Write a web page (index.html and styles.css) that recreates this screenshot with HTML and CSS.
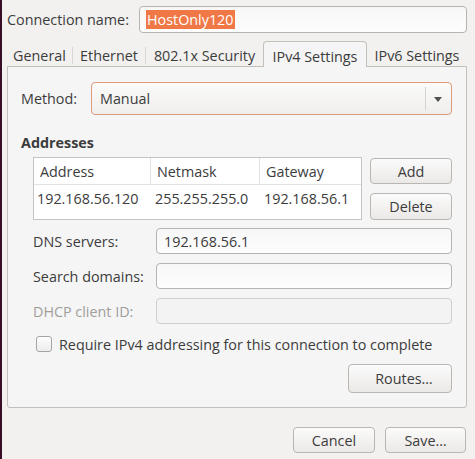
FILE: index.html
```html
<!DOCTYPE html>
<html>
<head>
<meta charset="utf-8">
<link rel="stylesheet" href="styles.css">
</head>
<body>
<div class="window">
  <div class="name-row">
    <span class="name-label">Connection name:</span>
    <div class="entry name-entry"><span class="selected">HostOnly120</span></div>
  </div>
  <div class="notebook">
    <div class="tabs">
      <div class="tab t-general">General</div>
      <div class="tab t-ethernet">Ethernet</div>
      <div class="tab t-security">802.1x Security</div>
      <div class="tab active t-ipv4">IPv4 Settings</div>
      <div class="tab t-ipv6">IPv6 Settings</div>
    </div>
    <div class="panel">
      <div class="method-row">
        <span class="method-label">Method:</span>
        <div class="combo">
          <span class="combo-text">Manual</span>
          <span class="combo-sep"></span>
          <span class="combo-arrow"></span>
        </div>
      </div>
      <div class="heading">Addresses</div>
      <div class="addr-block">
        <div class="table">
          <div class="thead">
            <div class="th c1">Address</div>
            <div class="th c2">Netmask</div>
            <div class="th c3">Gateway</div>
          </div>
          <div class="tr">
            <div class="td c1">192.168.56.120</div>
            <div class="td c2">255.255.255.0</div>
            <div class="td c3">192.168.56.1</div>
          </div>
        </div>
        <div class="addr-buttons">
          <div class="button add">Add</div>
          <div class="button delete">Delete</div>
        </div>
      </div>
      <div class="form">
        <div class="form-row">
          <span class="form-label">DNS servers:</span>
          <div class="entry field">192.168.56.1</div>
        </div>
        <div class="form-row">
          <span class="form-label">Search domains:</span>
          <div class="entry field"></div>
        </div>
        <div class="form-row disabled">
          <span class="form-label">DHCP client ID:</span>
          <div class="entry field"></div>
        </div>
        <div class="check-row">
          <span class="checkbox"></span>
          <span class="check-label">Require IPv4 addressing for this connection to complete</span>
        </div>
        <div class="routes-row">
          <div class="button routes">Routes…</div>
        </div>
      </div>
    </div>
  </div>
  <div class="footer">
    <div class="button cancel">Cancel</div>
    <div class="button save">Save…</div>
  </div>
</div>
</body>
</html>
```

FILE: styles.css
```css
* { box-sizing: border-box; }
html, body {
  margin: 0;
  padding: 0;
  background: #f2f1f0;
}
body {
  font-family: "Open Sans", "Noto Sans", sans-serif;
  font-size: 14.35px;
  color: #3c3c3c;
}
.window {
  width: 475px;
  height: 459px;
  border-left: 2px solid #3a0d27;
  padding-top: 6px;
}
.name-row {
  display: flex;
  align-items: center;
  height: 27px;
}
.name-label {
  padding-left: 5px;
  width: 137px;
  white-space: nowrap;
}
.entry {
  border: 1px solid #b7b4af;
  border-radius: 4px;
  background: linear-gradient(#f7f7f7, #fdfdfd);
  height: 100%;
  display: flex;
  align-items: center;
  padding-left: 7px;
  white-space: nowrap;
}
.name-entry {
  width: 328px;
  height: 27px;
  padding-left: 6px;
}
.selected {
  background: #f07746;
  color: #ffffff;
  line-height: 19px;
  padding: 0 1px;
}
.notebook {
  margin-left: 5px;
  width: 460px;
  margin-top: 8px;
}
.tabs {
  display: flex;
  height: 25px;
  align-items: stretch;
}
.tab {
  display: flex;
  align-items: center;
  justify-content: center;
  white-space: nowrap;
  position: relative;
  padding-top: 3px;
}
.t-general { width: 66px; border-right: 1px solid #d9d6d1; margin: 6px 0 2px; padding-top: 0; }
.t-ethernet { width: 73px; border-right: 1px solid #d9d6d1; margin: 6px 0 2px; padding-top: 0; }
.t-security { width: 117px; margin: 6px 0 2px; padding-top: 0; }
.tab.active {
  width: 104px;
  background: #f5f5f5;
  border: 1px solid #c3c0bb;
  border-bottom: none;
  border-radius: 4px 4px 0 0;
  margin-bottom: -1px;
  z-index: 1;
}
.t-ipv6 { width: 100px; margin: 6px 0 2px; padding-top: 0; }
.panel {
  height: 342px;
  background: #f5f5f5;
  border: 1px solid #c3c0bb;
  border-radius: 0 0 3px 3px;
  padding: 15px 14px 0 13px;
}
.method-row {
  display: flex;
  align-items: center;
  height: 33px;
}
.method-label { width: 70px; }
.combo {
  flex: 1;
  height: 33px;
  border: 1px solid #de9a7c;
  border-radius: 4px;
  background: linear-gradient(#fbfbfa, #efeeec);
  display: flex;
  align-items: center;
  padding-left: 8px;
}
.combo-text { flex: 1; }
.combo-sep {
  width: 1px;
  height: 23px;
  background: #d6d3ce;
}
.combo-arrow {
  width: 0;
  height: 0;
  border-left: 4px solid transparent;
  border-right: 4px solid transparent;
  border-top: 5px solid #505050;
  margin: 2px 9px 0 8px;
}
.heading {
  font-weight: bold;
  margin-top: 18px;
  height: 20px;
  line-height: 20px;
}
.addr-block {
  display: flex;
  margin-top: 4px;
  padding-left: 12px;
  gap: 8px;
}
.table {
  width: 329px;
  height: 63px;
  border: 1px solid #c6c4c0;
  background: #ffffff;
}
.thead {
  display: flex;
  height: 27px;
  border-bottom: 1px solid #e2e2e2;
}
.th {
  display: flex;
  align-items: center;
  padding-left: 6px;
  border-right: 1px solid #e2e2e2;
}
.th.c3 { border-right: none; }
.c1 { width: 117px; }
.c2 { width: 109px; }
.c3 { flex: 1; }
.tr {
  display: flex;
  height: 26px;
}
.td {
  display: flex;
  align-items: center;
  padding-left: 3px;
  white-space: nowrap;
}
.td.c2 { padding-left: 4px; }
.td.c3 { padding-left: 4px; }
.addr-buttons {
  display: flex;
  flex-direction: column;
  width: 82px;
}
.button {
  border: 1px solid #bab6b1;
  border-radius: 4px;
  background: linear-gradient(#fbfbfb, #ebe9e7);
  display: flex;
  align-items: center;
  justify-content: center;
  white-space: nowrap;
}
.add { height: 26px; margin-top: 1px; }
.delete { height: 27px; margin-top: 9px; }
.form { padding-left: 12px; }
.form-row {
  display: flex;
  align-items: center;
  height: 26px;
  margin-top: 9px;
}
.form-row:first-child { margin-top: 8px; }
.form-label { width: 123px; white-space: nowrap; }
.field { flex: 1; height: 26px; }
.disabled .form-label { color: #a09e9b; }
.disabled .field { background: #f3f3f3; border-color: #d2d0cc; }
.check-row {
  display: flex;
  align-items: center;
  height: 16px;
  margin-top: 12px;
  padding-left: 3px;
}
.checkbox {
  width: 16px;
  height: 16px;
  border: 1px solid #a8a5a0;
  border-radius: 3px;
  background: linear-gradient(#fdfdfd, #ececec);
  margin-right: 7px;
}
.check-label { white-space: nowrap; }
.routes-row {
  display: flex;
  justify-content: flex-end;
  margin-top: 12px;
}
.routes { width: 104px; height: 29px; padding-left: 8px; }
.footer {
  display: flex;
  justify-content: flex-end;
  gap: 10px;
  margin-top: 19px;
  padding-right: 9px;
}
.cancel { width: 82px; height: 26px; }
.save { width: 81px; height: 26px; }
```
